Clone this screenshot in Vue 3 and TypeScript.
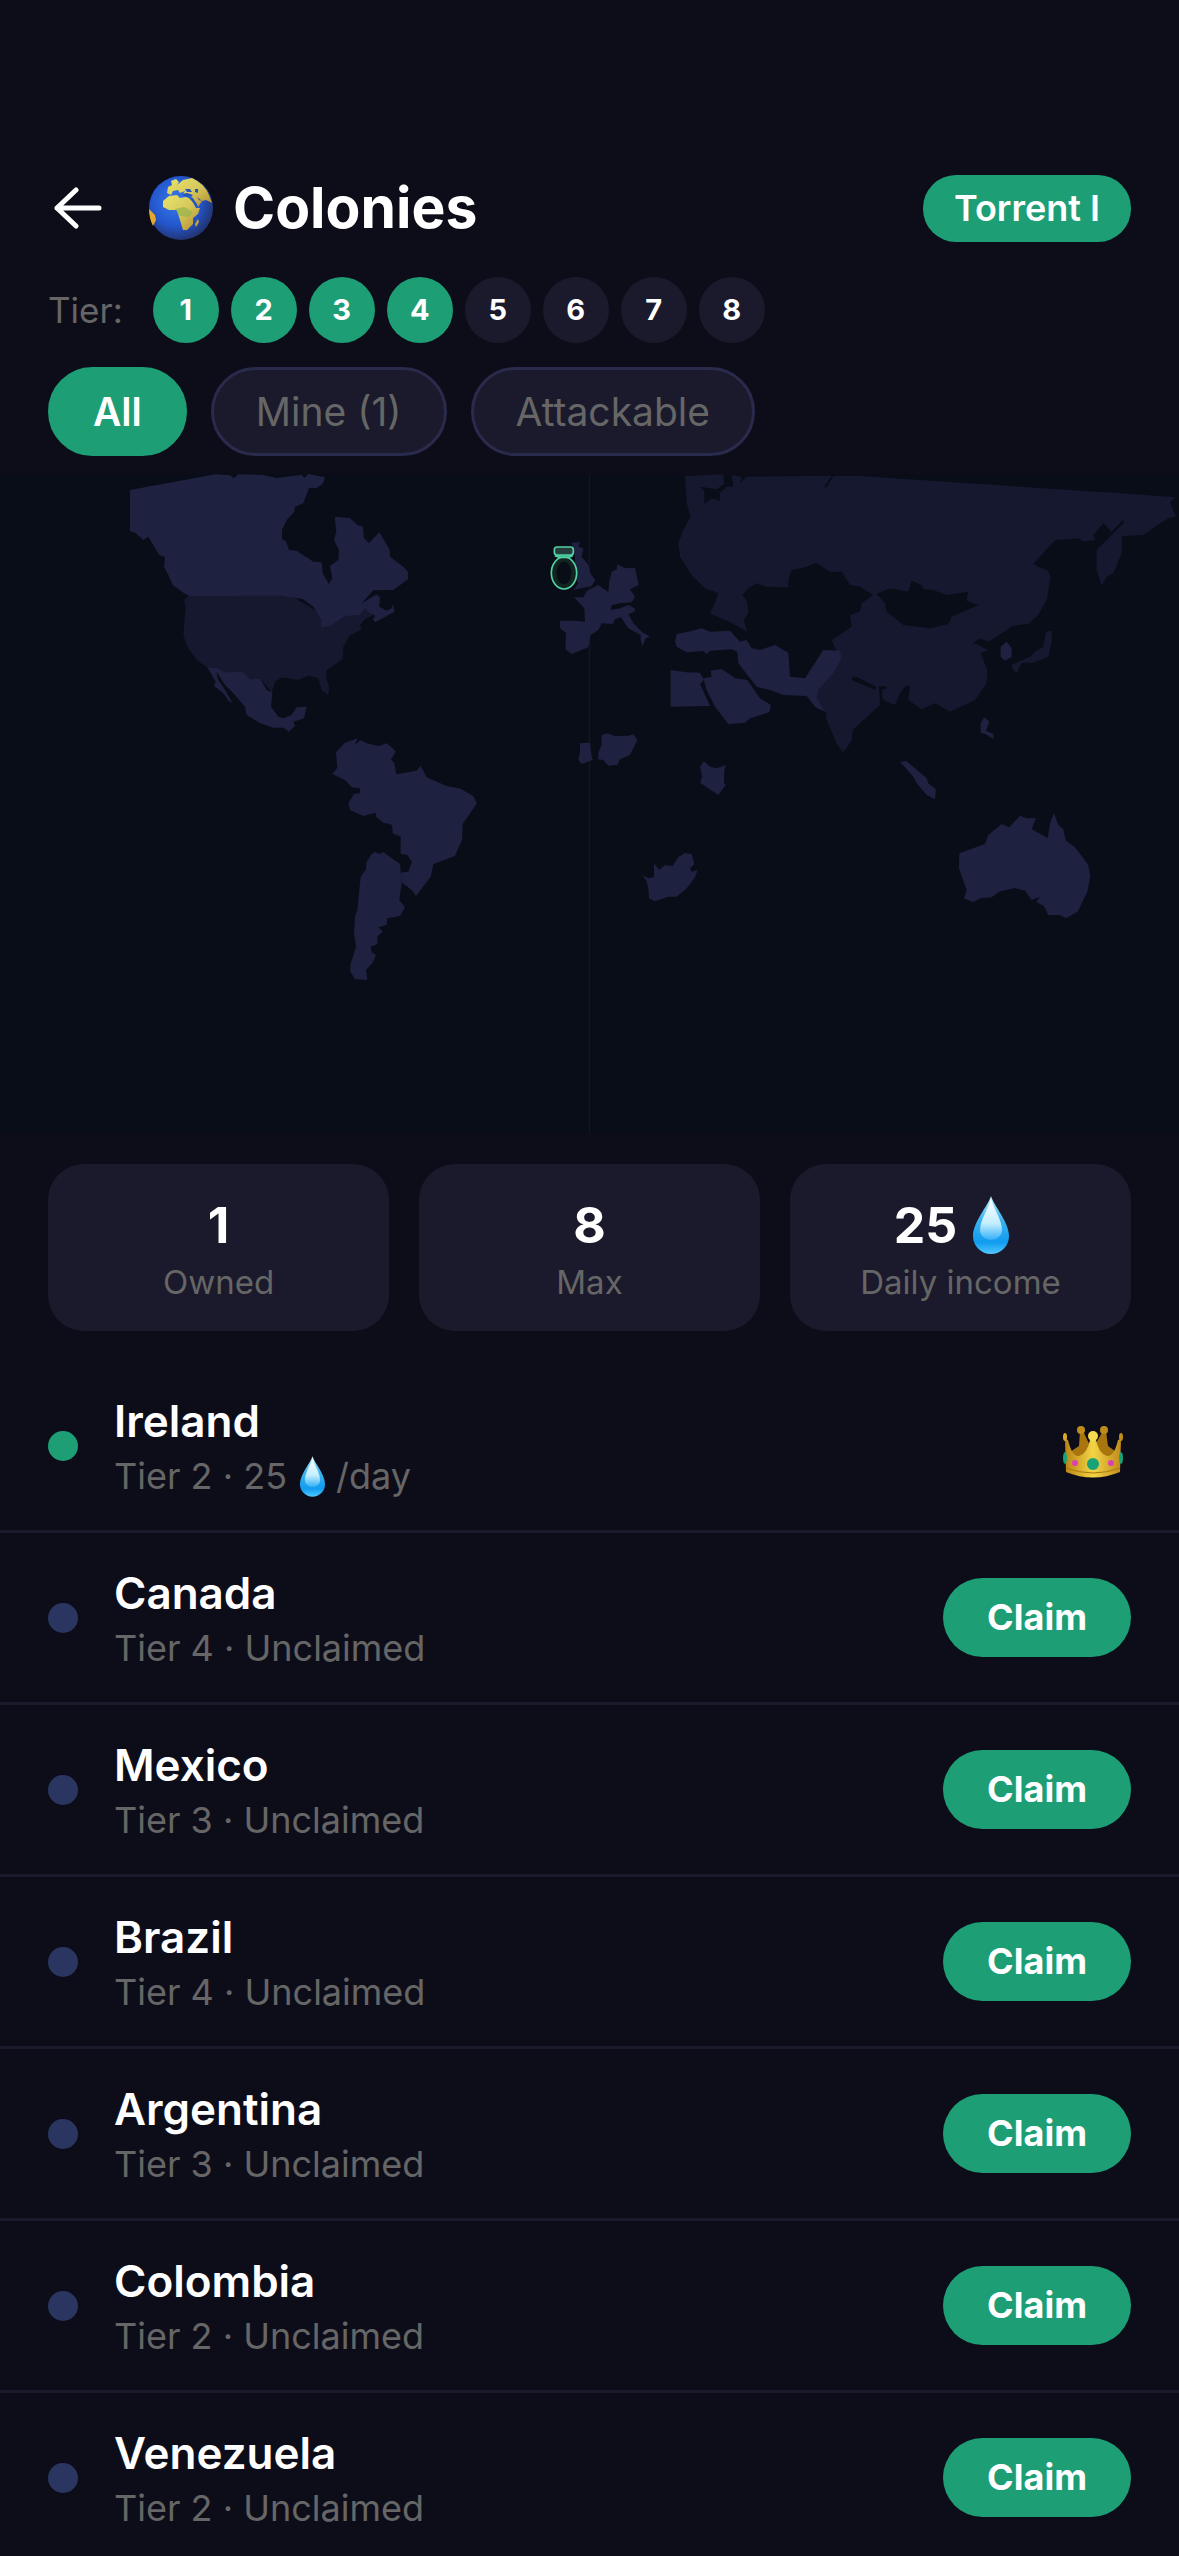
<script setup lang="ts">
import { ref } from 'vue'

interface Colony {
  name: string
  tier: number
  income?: number
  owned: boolean
}

const tiers = [1, 2, 3, 4, 5, 6, 7, 8]
const unlockedTier = 4

const filters = ['All', 'Mine (1)', 'Attackable']
const activeFilter = ref('All')

const colonies: Colony[] = [
  { name: 'Ireland', tier: 2, income: 25, owned: true },
  { name: 'Canada', tier: 4, owned: false },
  { name: 'Mexico', tier: 3, owned: false },
  { name: 'Brazil', tier: 4, owned: false },
  { name: 'Argentina', tier: 3, owned: false },
  { name: 'Colombia', tier: 2, owned: false },
  { name: 'Venezuela', tier: 2, owned: false },
]
</script>

<template>
  <main class="page">
    <svg class="defs" aria-hidden="true">
      <defs>
        <radialGradient id="sea" cx="42%" cy="40%" r="62%">
          <stop offset="0" stop-color="#3a7be8" />
          <stop offset="0.6" stop-color="#2357cf" />
          <stop offset="1" stop-color="#23336f" />
        </radialGradient>
        <linearGradient id="land" x1="0" y1="0" x2="1" y2="1">
          <stop offset="0" stop-color="#e6e36a" />
          <stop offset="0.5" stop-color="#d8c95c" />
          <stop offset="1" stop-color="#b08a2c" />
        </linearGradient>
        <linearGradient id="drop" x1="0" y1="0" x2="0" y2="1">
          <stop offset="0" stop-color="#b9efff" />
          <stop offset="0.4" stop-color="#3fb4ee" />
          <stop offset="0.8" stop-color="#119cf0" />
          <stop offset="1" stop-color="#4fc8ff" />
        </linearGradient>
        <linearGradient id="shine" x1="0" y1="0" x2="0" y2="1">
          <stop offset="0" stop-color="#ffffff" />
          <stop offset="0.6" stop-color="#c4efff" />
          <stop offset="1" stop-color="#35b0f8" />
        </linearGradient>
        <linearGradient id="gold" x1="0" y1="0" x2="1" y2="0">
          <stop offset="0" stop-color="#b98412" />
          <stop offset="0.5" stop-color="#f3d446" />
          <stop offset="1" stop-color="#c08c1c" />
        </linearGradient>
        <symbol id="droplet" viewBox="0 0 36 58">
          <path d="M18 0C21 10 36 26 36 40A18 18 0 0 1 0 40C0 26 15 10 18 0Z" fill="url(#drop)" />
          <path d="M18 2C20 12 29 24 29 34A11 10 0 0 1 7 34C7 24 16 12 18 2Z" fill="url(#shine)" />
        </symbol>
      </defs>
    </svg>

    <header class="header">
      <button class="back" type="button" aria-label="Back">
        <svg viewBox="0 0 48 42" fill="none" stroke="#fff" stroke-width="5" stroke-linecap="round" stroke-linejoin="round">
          <path d="M45 21H3M22 3L3 21L22 39" />
        </svg>
      </button>
      <h1 class="title">
        <svg class="globe" viewBox="0 0 64 64" aria-hidden="true">
          <circle cx="32" cy="32" r="32" fill="url(#sea)" />
          <path d="M18 17L19 11L23 9L22 5L27 3L30 6L28 9L34 4L43 2Q56 8 60 19L63 27L57 24L53 25L49 31L44 22L40 20L34 18L36 15L31 17L29 14L24 15L22 19Z" fill="url(#land)" />
          <path d="M14 25L20 20L28 19L31 22L37 21L42 23L47 32L51 32L49 38L44 42L44 48L38 54L34 54L31 44L28 34L20 34L14 31Z" fill="url(#land)" />
          <path d="M0 33L6 39L7 44L4 50Q0 42 0 33Z" fill="#e2a92c" />
          <path d="M46 48L49 43L50 46L47 51Z" fill="#c6a43c" />
          <path d="M26 33L35 31L44 36L40 41L31 40Z" fill="#93b44c" opacity="0.7" />
          <path d="M33 18L38 17L44 19L42 21L35 20ZM40 22L49 32L48 28L43 22ZM36 13L41 13L43 16L38 16ZM46 13L49 13L49 17L46 16ZM48 21L53 25L50 24Z" fill="#2454bd" />
        </svg>
        <span>Colonies</span>
      </h1>
      <span class="rank">Torrent I</span>
    </header>

    <section class="tiers" aria-label="Tier">
      <span class="tiers-label">Tier:</span>
      <ol class="tier-list">
        <li v-for="t in tiers" :key="t" class="tier" :class="{ unlocked: t <= unlockedTier }">{{ t }}</li>
      </ol>
    </section>

    <nav class="filters" aria-label="Filter colonies">
      <button
        v-for="f in filters"
        :key="f"
        type="button"
        class="filter"
        :class="{ active: f === activeFilter }"
        @click="activeFilter = f"
      >{{ f }}</button>
    </nav>

    <svg class="map" viewBox="0 0 3537 1980" role="img" aria-label="World map">
      <path d="M1768 0V1980" stroke="#111724" stroke-width="4" />
      <!-- North America -->
      <g transform="translate(300 -42)">
        <path class="major" d="M252 420L268 406L560 400L680 470L800 440L820 465L795 478L780 495L785 508L748 528L730 560L728 598L680 630L678 650L687 680L685 705L665 690L655 655L625 647L595 660L545 652L525 665L515 697L480 655L450 660L430 638L385 640L325 625L290 600L262 560L250 525L257 440Z" />
        <path class="land" d="M90 90L345 43L390 46L402 54L415 43L490 45L530 54L605 44L613 54L625 42L675 52L668 72L650 84L627 84L610 130L585 140L583 155L560 180L546 210L546 238L558 244L567 270L590 272L640 305L665 307L668 340L687 372L697 355L690 318L715 300L717 270L702 240L709 215L704 170L750 174L773 196L789 200L792 235L807 250L838 216L869 270L870 290L910 320L924 335L924 358L880 390L820 391L785 430L830 403L840 412L838 440L860 452L875 445L878 432L884 455L825 487L818 478L826 468L805 455L795 445L780 465L735 468L690 498L662 502L665 480L640 440L610 418L545 407L268 408L250 398L218 375L205 345L192 320L195 292L178 285L145 230L130 240L105 218L90 214Z" />
        <path class="land" d="M323 623L350 625L375 637L430 636L450 658L480 655L500 690L517 697L513 740L535 770L550 775L575 765L590 742L620 740L612 775L580 785L585 797L567 815L550 803L520 803L480 790L440 765L435 740L400 700L375 675L350 635L352 655L375 690L398 730L385 722L370 700L342 678L347 665Z" />
      </g>
      <!-- South America -->
      <g transform="translate(900 738)">
        <path class="land" d="M97 162L112 143L108 97L135 68L172 55L165 75L182 60L200 70L235 78L260 70L275 82L287 95L273 118L283 130L289 163L350 152L362 137L380 172L440 198L482 206L520 228L531 250L488 312L486 360L465 408L400 432L392 470L348 528L335 510L305 487L302 458L325 455L336 425L322 405L302 402L302 350L278 340L276 314L250 308L228 290L227 278L190 288L150 270L145 250L162 222L180 220L180 205L155 202L135 180Z" />
        <path class="land" d="M215 402L225 396L238 402L250 397L300 432L302 455L305 490L298 540L315 562L300 588L262 595L260 615L235 622L248 635L233 648L232 672L212 680L215 697L228 705L218 728L198 750L202 780L165 778L150 752L152 732L168 680L162 640L165 590L172 570L182 470L197 450L200 425Z" />
      </g>
      <!-- Europe and the owned colony -->
      <g transform="translate(1560 78)">
        <path class="land" d="M155 128L180 126L175 140L190 145L185 170L205 195L212 222L226 240L215 258L160 270L175 250L165 235L165 170Z" />
        <path class="land" d="M162 292L190 292L200 274L235 255L265 277L268 243L275 215L290 208L292 192L315 205L345 203L356 255L330 268L345 290L335 307L300 310L275 315L272 330L300 325L325 315L345 325L343 335L325 342L340 370L365 395L390 410L377 415L368 438L362 420L362 405L325 385L303 352L285 358L278 372L245 370L235 390L212 405L205 442L155 462L136 448L138 398L120 385L120 362L165 362L195 365L193 325Z" />
        <g stroke="#52d3a6" stroke-width="5">
          <ellipse cx="132" cy="219" rx="38" ry="48" fill="#12241f" />
          <path d="M107 168L114 160H150L156 168L146 172H118Z" fill="#3aa884" />
          <rect x="103" y="141" width="57" height="24" rx="8" fill="#263b3a" />
        </g>
        <ellipse cx="132" cy="219" rx="22" ry="34" fill="#080d18" />
      </g>
      <!-- Asia -->
      <g transform="translate(1980 -42)">
        <path class="major" d="M75 48L190 42L192 72L170 88L120 80L133 93L133 132L155 115L180 122L180 98L200 80L220 80L215 45L245 50L240 68L260 50L515 47L492 82L500 82L520 48L600 48L1380 100L1547 112L1530 125L1547 170L1525 175L1500 190L1450 225L1385 228L1385 280L1360 340L1340 350L1325 378L1310 330L1310 270L1390 190L1390 178L1355 215L1330 190L1300 225L1305 240L1270 245L1255 235L1185 240L1120 312L1145 325L1162 330L1172 350L1160 420L1135 465L1105 492L1060 497L985 545L960 535L940 548L985 570L962 580L982 630L980 670L945 720L870 755L825 730L785 748L745 720L750 680L740 675L720 700L705 735L670 720L658 690L660 735L578 810L575 840L560 865L548 877L530 850L500 780L498 755L470 745L455 715L475 690L520 640L540 600L515 540L575 500L570 465L600 455L605 430L640 405L600 380L570 375L545 335L510 335L468 308L440 320L395 330L385 360L385 382L320 380L290 370L265 385L247 405L262 425L265 460L252 480L262 515L210 487L150 460L165 430L175 400L135 385L95 345L60 290L55 250L70 210L92 170L80 130Z" />
        <path class="water" d="M650 402L690 385L745 395L755 362L785 375L790 388L820 390L860 405L925 395L920 422L955 435L875 470L865 492L810 505L730 495L680 455L675 430ZM578 650L590 650L648 680L645 690L575 660ZM655 680L680 678L680 686L668 688L664 712Z" />
        <path class="land" d="M45 545L50 522L85 515L125 505L150 515L210 512L240 545L260 540L275 565L300 570L345 555L385 578L390 650L435 655L490 570L540 572L545 595L520 640L475 690L470 715L495 755L465 740L440 708L370 705L330 690L290 680L235 610L232 575L215 568L150 572L140 582L130 573L80 577L50 560Z" />
        <path class="land" d="M32 630L80 637L120 638L132 660L120 672L150 738L32 740Z" />
        <path class="land" d="M130 655L155 650L152 632L185 627L225 655L262 660L300 715L333 735L328 757L270 775L255 788L205 792L165 740L140 690Z" />
        <path class="land" d="M1022 560L1040 545L1055 565L1055 590L1035 602L1022 590Z" />
        <path class="major" d="M1055 615L1110 590L1125 575L1150 560L1158 515L1175 512L1175 545L1165 590L1120 608L1085 608L1070 640L1060 630Z" />
      </g>
      <!-- Southeast Asia and Australia -->
      <g transform="translate(1980 558)">
        <path class="land" d="M962 190L972 172L988 185L978 212L1000 222L1001 237L975 222L962 218ZM720 305L740 304L800 355L805 370L828 388L825 418L800 405L770 370L760 350Z" />
        <path class="land" d="M898 580L975 552L985 525L1025 492L1048 502L1080 467L1100 475L1128 475L1115 507L1163 535L1170 490L1182 460L1195 495L1210 508L1218 542L1245 562L1285 615L1291 650L1282 695L1253 755L1218 775L1200 765L1165 765L1152 738L1128 725L1140 710L1115 720L1095 692L1065 684L1020 694L995 712L960 715L940 727L912 715L920 690L897 625Z" />
      </g>
      <!-- Africa -->
      <g transform="translate(1620 738)">
        <path class="land" d="M120 70L150 68L155 110L158 120L125 132L115 120L120 95ZM185 45L200 40L225 48L265 47L280 43L292 60L270 105L240 118L232 135L205 137L190 120L174 118L176 95L185 75ZM480 140L492 124L510 140L530 145L558 135L553 150L552 190L557 195L535 225L480 188L487 170Z" />
        <path class="land" d="M307 466L325 475L342 472L342 430L358 450L375 435L398 438L415 412L435 399L455 402L463 432L450 445L455 455L473 450L465 472L440 505L410 530L385 530L345 544L327 535L325 505L318 480Z" />
      </g>
    </svg>

    <section class="stats">
      <div class="stat">
        <strong class="stat-value">1</strong>
        <span class="stat-label">Owned</span>
      </div>
      <div class="stat">
        <strong class="stat-value">8</strong>
        <span class="stat-label">Max</span>
      </div>
      <div class="stat">
        <strong class="stat-value">25<svg class="drop-large" role="img" aria-label="drops"><use href="#droplet" /></svg></strong>
        <span class="stat-label">Daily income</span>
      </div>
    </section>

    <ul class="list">
      <li v-for="c in colonies" :key="c.name" class="row">
        <span class="dot" :class="{ owned: c.owned }"></span>
        <div class="info">
          <span class="name">{{ c.name }}</span>
          <span v-if="c.owned" class="detail">Tier {{ c.tier }} · {{ c.income }}<svg class="drop-small" role="img" aria-label="drops"><use href="#droplet" /></svg>/day</span>
          <span v-else class="detail">Tier {{ c.tier }} · Unclaimed</span>
        </div>
        <svg v-if="c.owned" class="crown" viewBox="0 0 60 52" role="img" aria-label="Owned">
          <path d="M4 28L16 20L17 5H20L29 24L40 5H43L45 20L56 28L52 42H8Z" fill="#a8750f" />
          <circle cx="18" cy="4" r="4" fill="#bd8c1a" />
          <circle cx="41" cy="4" r="4" fill="#bd8c1a" />
          <path d="M2 13L5 14Q9 31 16 30Q24 28 27 14H33Q36 28 44 30Q51 31 55 14L58 13L57 46Q30 57 3 46Z" fill="url(#gold)" />
          <path d="M3 42Q30 52 57 42" fill="none" stroke="#a8780f" stroke-width="1" />
          <ellipse cx="2" cy="11" rx="2" ry="4" fill="#dba924" />
          <ellipse cx="58" cy="11" rx="2" ry="4" fill="#c08d1a" />
          <circle cx="30" cy="10" r="5" fill="#f6dc4c" />
          <ellipse cx="30" cy="38" rx="6" ry="6" fill="#17a377" />
          <ellipse cx="2" cy="32" rx="2" ry="6" fill="#17a377" />
          <ellipse cx="58" cy="32" rx="2" ry="6" fill="#17a377" />
          <circle cx="12" cy="37" r="3" fill="#dd3fb4" />
          <circle cx="48" cy="37" r="3" fill="#dd3fb4" />
        </svg>
        <button v-else class="claim" type="button">Claim</button>
      </li>
    </ul>
  </main>
</template>

<style>
body {
  margin: 0;
  background: #0d0d1a;
}
</style>

<style scoped>
.page {
  box-sizing: border-box;
  height: 100vh;
  padding-top: 172px;
  display: flex;
  flex-direction: column;
  overflow: hidden;
  background: #0d0d1a;
  color: #fff;
  font-family: Inter, "Liberation Sans", sans-serif;
}

.page > * {
  flex-shrink: 0;
}

.page > .defs {
  position: absolute;
  width: 0;
  height: 0;
}

button {
  margin: 0;
  border: 0;
  font-family: inherit;
  cursor: pointer;
}

.header {
  display: flex;
  align-items: center;
  padding: 0 48px;
  height: 72px;
}

.back {
  display: flex;
  padding: 0 6px;
  background: none;
}

.back svg {
  width: 48px;
  height: 42px;
}

.title {
  flex: 1;
  display: flex;
  align-items: center;
  gap: 20px;
  margin: 0 0 0 41px;
  font-size: 57px;
  line-height: 72px;
  font-weight: 700;
}

.globe {
  width: 64px;
  height: 64px;
}

.rank {
  padding: 0 31px;
  border-radius: 33px;
  background: #1d9e75;
  font-size: 36px;
  line-height: 67px;
  font-weight: 600;
}

.tiers {
  display: flex;
  align-items: center;
  gap: 30px;
  margin-top: 33px;
  padding: 0 48px;
}

.tiers-label {
  color: #666;
  font-size: 35px;
}

.tier-list {
  display: flex;
  gap: 12px;
  margin: 0;
  padding: 0;
  list-style: none;
}

.tier {
  width: 66px;
  border-radius: 50%;
  background: #1a1a2c;
  font-size: 29px;
  line-height: 66px;
  font-weight: 700;
  text-align: center;
}

.tier.unlocked {
  background: #1d9e75;
}

.filters {
  display: flex;
  gap: 24px;
  margin-top: 24px;
  padding: 0 48px;
}

.filter {
  padding: 18px 42px;
  border: 3px solid #2a2a4c;
  border-radius: 45px;
  background: #1a1a2c;
  color: #666;
  font-size: 39px;
  line-height: 47px;
}

.filter.active {
  border-color: #1d9e75;
  background: #1d9e75;
  color: #fff;
  font-weight: 600;
}

.map {
  display: block;
  width: 100%;
  height: auto;
  margin-top: 18px;
  background: #080d18;
}

.land {
  fill: #1f2140;
}

.major {
  fill: #16182f;
}

.water {
  fill: #080d18;
}

.stats {
  display: grid;
  grid-template-columns: repeat(3, 1fr);
  gap: 30px;
  margin-top: 30px;
  padding: 0 48px;
}

.stat {
  display: flex;
  flex-direction: column;
  align-items: center;
  gap: 6px;
  padding: 30px 0 28px;
  border-radius: 36px;
  background: #1b1a2c;
}

.stat-value {
  display: flex;
  align-items: center;
  font-size: 50px;
  line-height: 62px;
  font-weight: 700;
}

.stat-label {
  color: #666;
  font-size: 33px;
  line-height: 41px;
}

.drop-large {
  width: 36px;
  height: 58px;
  margin: 0 18px 0 16px;
}

.list {
  flex: 1 1 0;
  min-height: 0;
  margin: 30px 0 0;
  padding: 0;
  overflow: hidden auto;
  scrollbar-width: none;
  list-style: none;
}

.row {
  display: flex;
  align-items: center;
  gap: 36px;
  padding: 32px 48px;
  border-bottom: 3px solid #1a1a2a;
}

.dot {
  width: 30px;
  height: 30px;
  border-radius: 50%;
  background: #2a3560;
}

.dot.owned {
  background: #1d9e75;
}

.info {
  flex: 1;
  display: flex;
  flex-direction: column;
  gap: 4px;
}

.name {
  font-size: 44px;
  line-height: 57px;
  font-weight: 600;
}

.detail {
  display: flex;
  align-items: center;
  color: #666;
  font-size: 36px;
  line-height: 44px;
}

.drop-small {
  width: 25px;
  height: 41px;
  margin: 0 11px 0 13px;
}

.crown {
  width: 60px;
  height: 52px;
  margin: 12px 8px 0 0;
}

.claim {
  padding: 0 44px;
  border-radius: 40px;
  background: #1d9e75;
  color: #fff;
  font-size: 36px;
  line-height: 79px;
  font-weight: 700;
}
</style>
